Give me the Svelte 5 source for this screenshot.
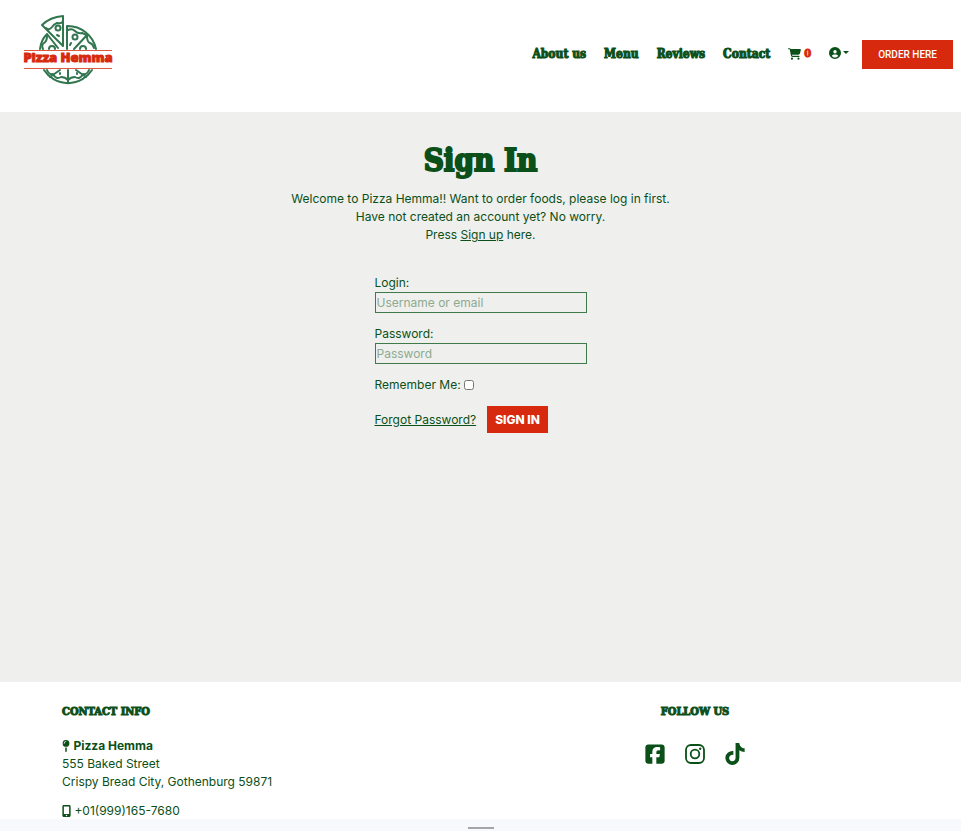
<script>
  const links = ['About us', 'Menu', 'Reviews', 'Contact'];
  let login = $state('');
  let password = $state('');
  let remember = $state(false);
</script>

<div class="page">
  <header>
    <a class="logo" href="#home" aria-label="Pizza Hemma">
      <svg width="92" height="72" viewBox="0 0 92 72">
        <g fill="none" stroke="#327650" stroke-width="2" stroke-linecap="round" stroke-linejoin="round">
          <path d="M45 35V12A29 29 0 0 1 74 35M18 35Q19 26 25 20L36 34M22 56A28.500 28.500 0 0 0 70 56" />
          <path d="M41 2Q28 3 20 11L41 32ZM24 14Q27 17 30 13Q32 10 35 9Q40 10 41 7" />
          <path d="M46 16Q50 14 53 17Q56 20 60 19L65 21L52 35M65 22Q65 28 68 29T72 34M25 22Q25 27 22 29T21 35" />
          <path d="M46 56V69M38 56L28 63M54 56L64 63M25 56Q27 61 31 60Q34 66 39 63Q43 63 46 66Q49 63 53 63Q58 66 61 60Q65 61 67 56" />
          <circle cx="36" cy="14" r="2.500" /><circle cx="53" cy="23" r="2.500" />
          <path d="M27 35a3 3 0 0 1 6 0M58 35a3 3 0 0 1 6 0M35 21l2 1M48 31l1-2M38 59v1M55 59v1" />
        </g>
        <path d="M2 36.500H90M2 54.500H90" stroke="#e0583f" />
        <text x="46" y="48" text-anchor="middle">Pizza Hemma</text>
      </svg>
    </a>
    <nav>
      {#each links as link}
        <a class="slab" href="#{link}">{link}</a>
      {/each}
      <a class="cart slab" href="#cart" aria-label="Cart, 0 items">
        <svg width="13" height="12" viewBox="0 0 576 512" fill="currentColor"><path d="M0 24C0 10.700 10.700 0 24 0H69.500c22 0 41.500 12.800 50.600 32h411c26.300 0 45.500 25 38.600 50.400l-41 152.300c-8.500 31.400-37 53.300-69.500 53.300H170.700l5.400 28.500c2.200 11.300 12.100 19.500 23.600 19.500H488c13.300 0 24 10.700 24 24s-10.700 24-24 24H199.700c-34.600 0-64.300-24.600-70.700-58.500L77.400 54.500c-.7-3.800-4-6.500-7.900-6.500H24C10.700 48 0 37.300 0 24zM128 464a48 48 0 1 1 96 0 48 48 0 1 1 -96 0zm336-48a48 48 0 1 1 0 96 48 48 0 1 1 0-96z" /></svg>
        <span>0</span>
      </a>
      <button class="account" aria-label="Account menu">
        <svg width="12" height="12" viewBox="0 0 512 512" fill="currentColor"><path d="M399 384.200C376.900 345.800 335.400 320 288 320H224c-47.400 0-88.900 25.800-111 64.200c35.200 39.200 86.200 63.800 143 63.800s107.800-24.700 143-63.800zM0 256a256 256 0 1 1 512 0A256 256 0 1 1 0 256zm256 16a72 72 0 1 0 0-144 72 72 0 1 0 0 144z" /></svg>
        <svg width="6" height="3" viewBox="0 0 6 3" fill="currentColor"><path d="M0 0H6L3 3Z" /></svg>
      </button>
      <button class="order">ORDER HERE</button>
    </nav>
  </header>

  <main>
    <h1 class="slab">Sign In</h1>
    <p>
      Welcome to Pizza Hemma!! Want to order foods, please log in first.<br />
      Have not created an account yet? No worry.<br />
      Press <a href="#signup">Sign up</a> here.
    </p>
    <form onsubmit={(e) => e.preventDefault()}>
      <div class="field">
        <label for="login">Login:</label>
        <input id="login" type="text" placeholder="Username or email" bind:value={login} />
      </div>
      <div class="field">
        <label for="password">Password:</label>
        <input id="password" type="password" placeholder="Password" bind:value={password} />
      </div>
      <div class="remember">
        <label for="remember">Remember Me:</label>
        <input id="remember" type="checkbox" bind:checked={remember} />
      </div>
      <div class="actions">
        <a href="#forgot">Forgot Password?</a>
        <button type="submit">SIGN IN</button>
      </div>
    </form>
  </main>

  <footer>
    <section class="contact">
      <h2 class="slab">CONTACT INFO</h2>
      <address>
        <svg width="8" height="12" viewBox="0 0 320 512" fill="currentColor"><path d="M16 144a144 144 0 1 1 288 0A144 144 0 1 1 16 144zM160 80c8.800 0 16-7.200 16-16s-7.200-16-16-16c-53 0-96 43-96 96c0 8.800 7.200 16 16 16s16-7.200 16-16c0-35.300 28.700-64 64-64zM128 480V317.100c10.400 1.900 21.100 2.900 32 2.900s21.600-1 32-2.900V480c0 17.700-14.300 32-32 32s-32-14.300-32-32z" /></svg>
        <strong>Pizza Hemma</strong><br />
        555 Baked Street<br />
        Crispy Bread City, Gothenburg 59871
      </address>
      <div class="phone">
        <svg width="9" height="12" viewBox="0 0 384 512" fill="currentColor"><path d="M16 64C16 28.700 44.700 0 80 0H304c35.300 0 64 28.700 64 64V448c0 35.300-28.700 64-64 64H80c-35.300 0-64-28.700-64-64V64zM224 448a32 32 0 1 0 -64 0 32 32 0 1 0 64 0zM304 64H80V384H304V64z" /></svg>
        <span>+01(999)165-7680</span>
      </div>
    </section>
    <section class="follow">
      <h2 class="slab">FOLLOW US</h2>
      <div class="social">
        <a href="#facebook" aria-label="Facebook"><svg width="20" height="22" viewBox="0 0 448 512" fill="currentColor"><path d="M64 32C28.700 32 0 60.700 0 96V416c0 35.300 28.700 64 64 64h98.200V334.200H109.400V256h52.800V222.300c0-87.100 39.400-127.500 125-127.500c16.200 0 44.200 3.200 55.700 6.400V172c-6-.6-16.500-1-29.600-1c-42 0-58.200 15.900-58.200 57.200V256h83.600l-14.400 78.200H255V480H384c35.300 0 64-28.700 64-64V96c0-35.300-28.700-64-64-64H64z" /></svg></a>
        <a href="#instagram" aria-label="Instagram"><svg width="20" height="22" viewBox="0 0 20 22" fill="none" stroke="currentColor" stroke-width="1.800"><rect x="1" y="2" width="18" height="18" rx="5" /><circle cx="10" cy="11" r="4.300" /><circle cx="15.200" cy="5.800" r="1.200" fill="currentColor" stroke="none" /></svg></a>
        <a href="#tiktok" aria-label="TikTok"><svg width="20" height="22" viewBox="0 0 448 512" fill="currentColor"><path d="M448 209.900a210.100 210.100 0 0 1-122.800-39.300V349.400A162.600 162.600 0 1 1 185 188.300V278.200a74.600 74.600 0 1 0 52.200 71.200V0l88 0a121.200 121.200 0 0 0 1.900 22.200 122.200 122.200 0 0 0 53.900 80.200A121.400 121.400 0 0 0 448 122.400z" /></svg></a>
      </div>
    </section>
  </footer>
  <div class="drawer"><span></span></div>
</div>

<style>
  :global(body) { margin: 0; }
  .page {
    display: flex;
    flex-direction: column;
    min-height: 100vh;
    background: #fff;
    color: #0b4f19;
    font: 12px/18px Inter, "Liberation Sans", sans-serif;
  }
  a { color: inherit; }
  button { cursor: pointer; font-family: inherit; }
  .slab {
    font-family: "DejaVu Serif Condensed", "DejaVu Serif", serif;
    font-weight: 700;
    -webkit-text-stroke: 1px currentColor;
  }
  header {
    display: flex;
    justify-content: space-between;
    align-items: flex-start;
    height: 112px;
    padding: 0 8px 0 22px;
    box-sizing: border-box;
  }
  .logo { padding-top: 14px; }
  .logo svg { display: block; }
  .logo text { font: 800 13px "Open Sans", sans-serif; fill: #d7290d; stroke: #d7290d; stroke-width: 1px; }
  nav { display: flex; align-items: center; gap: 18px; padding-top: 40px; }
  nav a { text-decoration: none; font-size: 12px; line-height: 16px; padding-bottom: 2px; }
  .cart { display: flex; align-items: center; gap: 3px; }
  .cart span { color: #d7290d; font-size: 11px; }
  .account {
    display: flex;
    align-items: center;
    gap: 2px;
    margin-right: -5px;
    padding: 0 0 4px;
    border: 0;
    background: none;
    color: inherit;
  }
  .order {
    padding: 5px 16px;
    border: 0;
    background: #d7290d;
    color: #fff;
    font: 500 10px/19px Roboto, sans-serif;
  }
  main {
    display: flex;
    flex: 1;
    flex-direction: column;
    align-items: center;
    padding: 28px 16px 32px;
    background: #efefed;
  }
  h1 { margin: 0; font-size: 31px; line-height: 40px; }
  h1.slab { -webkit-text-stroke-width: 2px; }
  p { margin: 10px 0 30px; text-align: center; }
  form { width: 212px; }
  .field { display: flex; flex-direction: column; margin-bottom: 12px; }
  .field input {
    height: 21px;
    padding: 0 1px 1px;
    box-sizing: border-box;
    border: 1px solid #3f7a4b;
    background: transparent;
    color: inherit;
    font: inherit;
  }
  .field input::placeholder { color: #8dab91; }
  .remember { display: flex; align-items: center; gap: 3px; margin-bottom: 12px; }
  .remember input { width: 10px; height: 10px; margin: 0; }
  .actions { display: flex; align-items: center; gap: 11px; }
  .actions button {
    padding: 5px 8px;
    border: 0;
    background: #d7290d;
    color: #fff;
    font-size: 12px;
    font-weight: 800;
    line-height: 17px;
  }
  footer { display: flex; justify-content: space-between; padding: 21px 62px 0; }
  h2 { margin: 0; font-size: 11px; line-height: 18px; }
  address { margin: 16px 0 12px; font-style: normal; }
  address svg, .phone svg { vertical-align: -2px; }
  .phone { line-height: 16px; }
  .follow { display: flex; flex-direction: column; align-items: center; width: 408px; }
  .social { display: flex; gap: 20px; margin-top: 22px; }
  .social svg { display: block; }
  .drawer { display: flex; justify-content: center; padding-top: 8px; height: 4px; background: #f8f9fd; }
  .drawer span { width: 26px; height: 2px; background: #a5a5a5; }
</style>
